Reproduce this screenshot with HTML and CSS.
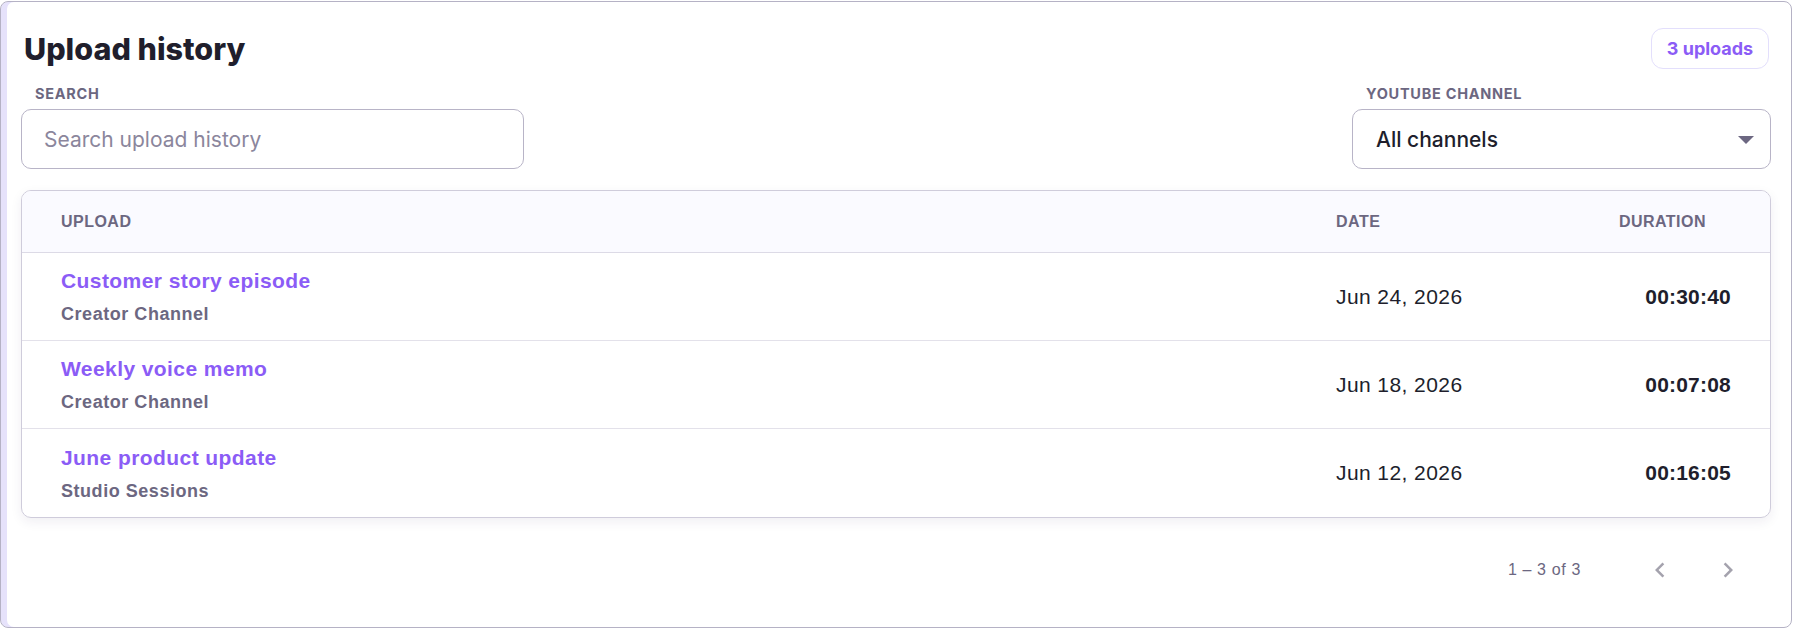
FILE: index.html
```html
<!DOCTYPE html>
<html lang="en">
<head>
    <meta charset="UTF-8">
    <meta name="viewport" content="width=device-width, initial-scale=1.0">
    <title>Upload history</title>
    <link rel="stylesheet" href="styles.css">
</head>
<body>

<!-- upload history panel -->
<section class="panel">
    <header class="panel-head">
        <h1>Upload history</h1>
        <span class="count-badge">3 uploads</span>
    </header>

    <!-- filters -->
    <div class="filters">
        <label class="field field-search">
            <span class="field-label">Search</span>
            <input type="text" class="text-input" placeholder="Search upload history">
        </label>
        <div class="field field-channel">
            <span class="field-label">YouTube channel</span>
            <div class="dropdown">
                <span>All channels</span>
                <span class="caret"></span>
            </div>
        </div>
    </div>

    <!-- uploads table -->
    <div class="uploads">
        <div class="uploads-row uploads-head">
            <div>Upload</div>
            <div>Date</div>
            <div class="col-duration">Duration</div>
        </div>

        <div class="uploads-row">
            <div class="upload-name">
                <a href="#">Customer story episode</a>
                <span>Creator Channel</span>
            </div>
            <div class="upload-date">Jun 24, 2026</div>
            <div class="upload-duration">00:30:40</div>
        </div>

        <div class="uploads-row">
            <div class="upload-name">
                <a href="#">Weekly voice memo</a>
                <span>Creator Channel</span>
            </div>
            <div class="upload-date">Jun 18, 2026</div>
            <div class="upload-duration">00:07:08</div>
        </div>

        <div class="uploads-row">
            <div class="upload-name">
                <a href="#">June product update</a>
                <span>Studio Sessions</span>
            </div>
            <div class="upload-date">Jun 12, 2026</div>
            <div class="upload-duration">00:16:05</div>
        </div>
    </div>

    <!-- paging -->
    <div class="pager">
        <span class="pager-range">1 – 3 of 3</span>
        <button class="pager-btn" disabled>
            <svg viewBox="0 0 24 24" width="30" height="30"><path d="M15.41 7.41L14 6l-6 6 6 6 1.41-1.41L10.83 12z"/></svg>
        </button>
        <button class="pager-btn" disabled>
            <svg viewBox="0 0 24 24" width="30" height="30"><path d="M8.59 16.59L10 18l6-6-6-6-1.41 1.41L13.17 12z"/></svg>
        </button>
    </div>
</section>

</body>
</html>
```

FILE: styles.css
```css
:root {
    --ink: #201e2c;
    --muted: #6c6781;
    --purple: #8b5cf6;
    --line: #cfccdb;
    --line-soft: #e3e1ea;
    --field-line: #b8b4c7;
}

html, body {
    margin: 0;
}

body {
    padding: 1px 1px 1px 0;
    background: #fff;
    font-family: 'Inter', 'Noto Sans', sans-serif;
    color: var(--ink);
}

.panel {
    box-sizing: border-box;
    height: calc(100vh - 2px);
    border: 1px solid #b5b2c5;
    border-radius: 8px;
    box-shadow: inset 6px 0 0 #e6e2fb;
    padding: 25px 20px 20px;
}

.panel-head {
    height: 43px;
    display: flex;
    align-items: center;
    justify-content: space-between;
}

.panel-head h1 {
    margin: 0 0 0 3px;
    font-size: 30.5px;
    line-height: 36px;
    font-weight: 800;
}

.count-badge {
    box-sizing: border-box;
    height: 41px;
    width: 118px;
    margin-right: 2px;
    display: flex;
    align-items: center;
    justify-content: center;
    border: 1px solid #e3dffc;
    border-radius: 12px;
    color: var(--purple);
    font-size: 18px;
    font-weight: 700;
}

/* filters */
.filters {
    margin-top: 15px;
    display: flex;
    justify-content: space-between;
}

.field {
    display: flex;
    flex-direction: column;
}

.field-search { width: 503px; }
.field-channel { width: 419px; }

.field-label {
    margin: 0 0 7px 14px;
    font-size: 14.5px;
    line-height: 17px;
    font-weight: 700;
    letter-spacing: 0.05em;
    text-transform: uppercase;
    color: var(--muted);
}

.text-input,
.dropdown {
    box-sizing: border-box;
    height: 60px;
    border: 1px solid var(--field-line);
    border-radius: 10px;
    font-family: inherit;
    font-size: 21px;
    background: #fff;
}

.text-input {
    width: 100%;
    padding: 0 22px;
    color: var(--ink);
    outline: none;
}

.text-input::placeholder {
    color: #8b869c;
}

.dropdown {
    display: flex;
    align-items: center;
    justify-content: space-between;
    padding: 0 16px 0 23px;
    font-weight: 500;
    color: var(--ink);
}

.caret {
    width: 0;
    height: 0;
    border-left: 8.5px solid transparent;
    border-right: 8.5px solid transparent;
    border-top: 8px solid var(--muted);
    margin-top: 2px;
}

/* table */
.uploads {
    margin-top: 21px;
    border: 1px solid var(--line);
    border-radius: 10px;
    overflow: hidden;
    box-shadow: 0 4px 12px rgba(40, 30, 80, 0.07);
    font-family: 'Liberation Sans', Arial, sans-serif;
}

.uploads-row {
    display: grid;
    grid-template-columns: 1fr 200px 195px;
    align-items: center;
    min-height: 87px;
    padding: 0 39px;
    border-bottom: 1px solid var(--line-soft);
}

.uploads-row:last-child {
    border-bottom: none;
    min-height: 88px;
}

.uploads-head {
    min-height: 61px;
    background: #fafaff;
    border-bottom-color: #dcdae6;
    font-size: 16px;
    font-weight: 700;
    letter-spacing: 0.03em;
    text-transform: uppercase;
    color: var(--muted);
}

.uploads-head .col-duration {
    text-align: right;
    padding-right: 25px;
}

.upload-name {
    display: flex;
    flex-direction: column;
}

.upload-name a {
    font-size: 21px;
    line-height: 26px;
    font-weight: 700;
    letter-spacing: 0.02em;
    color: var(--purple);
    text-decoration: none;
}

.upload-name span {
    margin-top: 9px;
    font-size: 18px;
    line-height: 22px;
    font-weight: 700;
    letter-spacing: 0.03em;
    color: var(--muted);
}

.upload-date {
    font-size: 21px;
    letter-spacing: 0.02em;
    color: var(--ink);
}

.upload-duration {
    text-align: right;
    font-size: 21px;
    font-weight: 700;
    letter-spacing: 0.01em;
    color: var(--ink);
}

/* paging */
.pager {
    margin-top: 24px;
    height: 56px;
    display: flex;
    align-items: center;
    justify-content: flex-end;
    gap: 20px;
    padding-right: 19px;
    font-family: 'Liberation Sans', Arial, sans-serif;
}

.pager-range {
    margin-right: 35px;
    font-size: 16px;
    letter-spacing: 0.04em;
    color: var(--muted);
}

.pager-btn {
    width: 48px;
    height: 48px;
    padding: 0;
    border: none;
    background: none;
    display: flex;
    align-items: center;
    justify-content: center;
}

.pager-btn svg {
    fill: #a4a2ad;
}
```
